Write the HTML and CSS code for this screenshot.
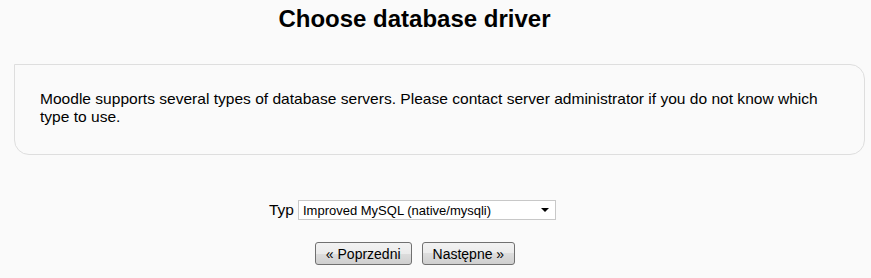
FILE: index.html
```html
<!DOCTYPE html>
<html>
<head>
<meta charset="utf-8">
<link rel="stylesheet" href="styles.css">
</head>
<body>
<h2 class="title">Choose database driver</h2>
<div class="box">
  <p>Moodle supports several types of database servers. Please contact server administrator if you do not know which type to use.</p>
</div>
<form class="form">
  <div class="row">
    <label class="label">Typ</label>
    <div class="select">
      <span>Improved MySQL (native/mysqli)</span>
      <svg class="arrow" width="8" height="4" viewBox="0 0 8 4"><path d="M0 0H8L4 4Z" fill="#000"/></svg>
    </div>
  </div>
  <div class="buttons">
    <button type="button" class="btn">« Poprzedni</button>
    <button type="button" class="btn">Następne »</button>
  </div>
</form>
</body>
</html>
```

FILE: styles.css
```css
html, body {
  margin: 0;
  padding: 0;
  background: #fafafa;
  font-family: "Liberation Sans", Arial, sans-serif;
  color: #000;
}
.title {
  margin: 0 42px 0 0;
  padding-top: 5px;
  text-align: center;
  font-size: 24px;
  font-weight: bold;
  line-height: 28px;
}
.box {
  margin: 31px 6px 0 14px;
  border: 1px solid #dedede;
  border-radius: 0 15px 15px 15px;
  background: #fafafa;
  padding: 25px 40px 28px 25px;
}
.box p {
  margin: 0;
  font-size: 15.55px;
  line-height: 18px;
}
.form {
  margin-top: 45px;
  display: flex;
  flex-direction: column;
  align-items: center;
}
.row {
  display: flex;
  align-items: center;
  gap: 4px;
  margin-right: 46px;
}
.label {
  font-size: 15.5px;
}
.select {
  width: 248px;
  height: 18px;
  border: 1px solid #c8c8c8;
  background: #fff;
  display: flex;
  align-items: center;
  justify-content: space-between;
  padding: 0 4px 0 4px;
  box-sizing: content-box;
  font-size: 13px;
}
.arrow {
  margin-right: 2px;
}
.buttons {
  margin-top: 22px;
  display: flex;
  gap: 10px;
  margin-right: 41px;
}
.btn {
  font-family: "Liberation Sans", Arial, sans-serif;
  font-size: 14px;
  height: 23px;
  padding: 0 10px;
  border: 1px solid #707070;
  border-radius: 3px;
  background: linear-gradient(#f2f2f2, #ebebeb 50%, #dddddd 50%, #cfcfcf);
  color: #000;
}
```
